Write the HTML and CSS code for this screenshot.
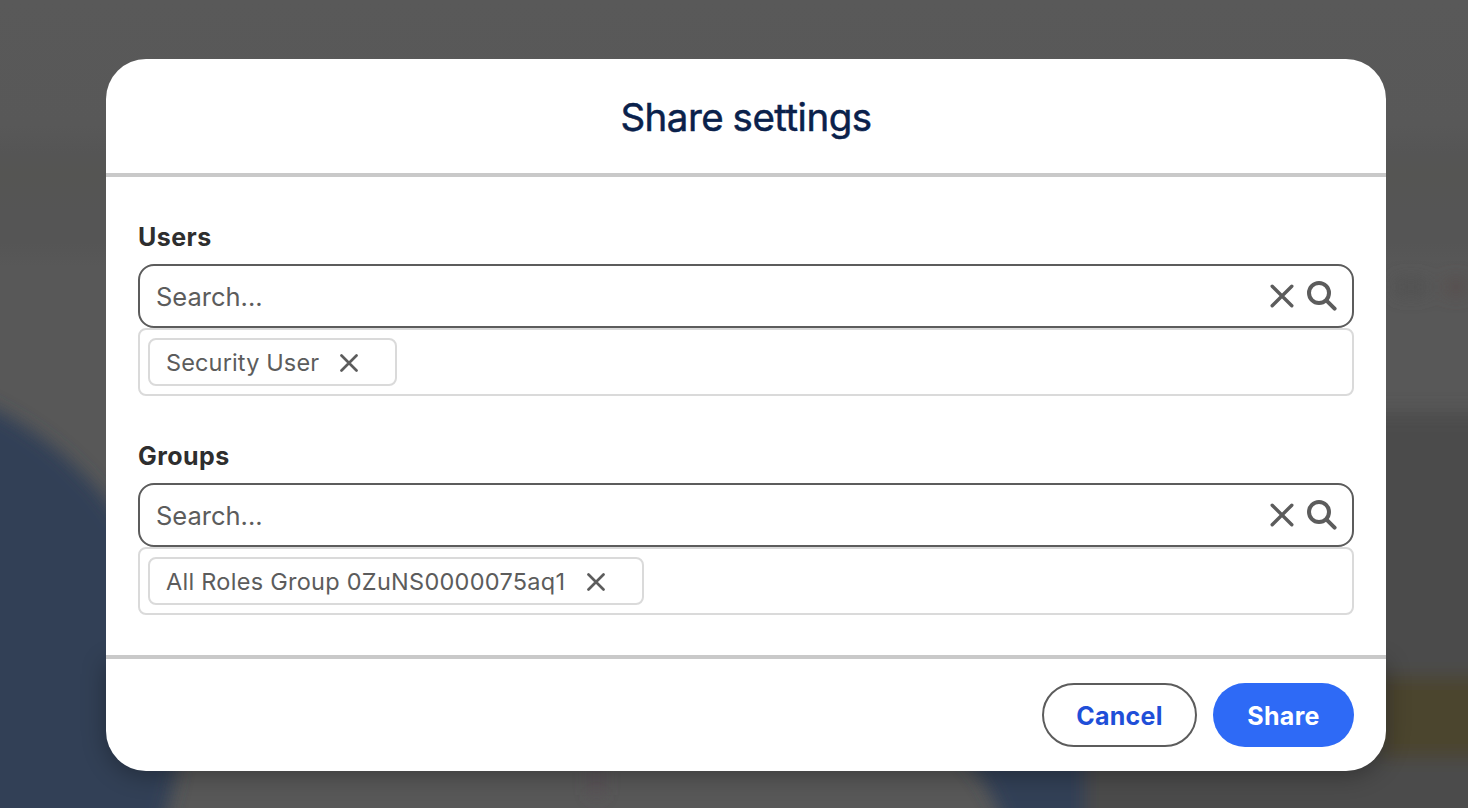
FILE: index.html
```html
<!DOCTYPE html>
<html lang="en">
<head>
<meta charset="utf-8">
<title>Share settings</title>
<link rel="stylesheet" href="styles.css">
</head>
<body>
<svg class="backdrop" viewBox="0 0 1468 808" aria-hidden="true">
  <defs>
    <filter id="soft" x="-20%" y="-20%" width="140%" height="140%"><feGaussianBlur stdDeviation="9"/></filter>
    <linearGradient id="page" x1="0" y1="0" x2="0" y2="1">
      <stop offset="0" stop-color="#595959"/><stop offset=".155" stop-color="#585858"/>
      <stop offset=".19" stop-color="#555555"/><stop offset=".215" stop-color="#555553"/>
      <stop offset=".26" stop-color="#555555"/><stop offset=".30" stop-color="#555555"/><stop offset=".33" stop-color="#585858"/>
      <stop offset="1" stop-color="#585858"/>
    </linearGradient>
  </defs>
  <rect width="1468" height="808" fill="url(#page)"/>
  <g filter="url(#soft)">
    <rect x="1085" y="412" width="450" height="450" fill="#4c4c4b"/>
    <rect x="1380" y="676" width="150" height="82" fill="#4b442d"/>
    <circle cx="-160" cy="713" r="341" fill="#324057"/>
    <path d="M930 730Q995 770 1010 850H1085V730Z" fill="#324057"/>
    <rect x="1395" y="280" width="32" height="14" fill="#505050"/>
    <rect x="1446" y="280" width="20" height="14" fill="#574b48"/>
    <rect x="592" y="760" width="9" height="35" fill="#5a4c54"/>
  </g>
</svg>
<main class="modal" role="dialog" aria-labelledby="title">
  <header class="modal-header"><h1 id="title" class="modal-title">Share settings</h1></header>
  <div class="modal-body">
    <section class="field">
      <h2 class="label">Users</h2>
      <div class="search">
        <span class="placeholder">Search...</span>
        <svg class="clear" viewBox="0 0 24 24"><path d="M2.2 2.2 21.8 21.8M21.8 2.2 2.2 21.8"/></svg>
        <svg class="find" viewBox="0 0 30 30"><circle cx="12" cy="12" r="10"/><path d="m19.3 19.3 8.3 8.3"/></svg>
      </div>
      <div class="selection">
        <div class="chip">
          <span class="chip-text">Security User</span>
          <svg class="remove" viewBox="0 0 18 18"><path d="M1.5 1.5 16.5 16.5M16.5 1.5 1.5 16.5"/></svg>
        </div>
      </div>
    </section>
    <section class="field">
      <h2 class="label">Groups</h2>
      <div class="search">
        <span class="placeholder">Search...</span>
        <svg class="clear" viewBox="0 0 24 24"><path d="M2.2 2.2 21.8 21.8M21.8 2.2 2.2 21.8"/></svg>
        <svg class="find" viewBox="0 0 30 30"><circle cx="12" cy="12" r="10"/><path d="m19.3 19.3 8.3 8.3"/></svg>
      </div>
      <div class="selection">
        <div class="chip chip-wide">
          <span class="chip-text">All Roles Group 0ZuNS0000075aq1</span>
          <svg class="remove" viewBox="0 0 18 18"><path d="M1.5 1.5 16.5 16.5M16.5 1.5 1.5 16.5"/></svg>
        </div>
      </div>
    </section>
  </div>
  <footer class="modal-footer">
    <button class="button cancel">Cancel</button>
    <button class="button share">Share</button>
  </footer>
</main>
</body>
</html>
```
FILE: styles.css
```css
* { box-sizing: border-box; }
body {
  margin: 0;
  height: 808px;
  overflow: hidden;
  padding: 59px 82px 37px 106px;
  background: #585858;
  font-family: Inter, "Liberation Sans", sans-serif;
  color: #5c5c5c;
}
.backdrop { position: absolute; z-index: -2; left: 0; top: 0; width: 1468px; height: 808px; }
.modal {
  position: relative;
  display: flex;
  flex-direction: column;
  width: 1280px;
  height: 712px;
  border-radius: 40px;
  background: #fff;
}
/* Shadow cast by the footer only */
.modal::before {
  content: "";
  position: absolute;
  z-index: -1;
  inset: 600px 0 0;
  border-radius: 0 0 40px 40px;
  box-shadow: 0 4px 24px rgba(0, 0, 0, .32);
}
.modal-header {
  display: flex;
  justify-content: center;
  align-items: center;
  height: 118px;
  padding-top: 2px;
  border-bottom: 4px solid #c9c9c9;
}
.modal-title {
  margin: 0;
  font-size: 38.5px;
  line-height: 48px;
  font-weight: 400;
  letter-spacing: -0.5px;
  word-spacing: -1px;
  font-variant-ligatures: none;
  font-feature-settings: "calt" 0;
  color: #0a214b;
  -webkit-text-stroke: 0.5px #0a214b;
}
.modal-body {
  display: flex;
  flex-direction: column;
  gap: 43px;
  height: 478px;
  padding: 43px 32px 0;
}
.field { height: 176px; }
.label {
  margin: 0 0 8px;
  height: 36px;
  line-height: 34px;
  font-size: 25px;
  font-weight: 700;
  letter-spacing: 0.45px;
  color: #2e2e2e;
}
.search {
  display: flex;
  align-items: center;
  height: 64px;
  padding: 0 16px;
  border: 2px solid #5c5c5c;
  border-radius: 16px;
}
.placeholder {
  flex: 1;
  padding-top: 2px;
  font-size: 25.5px;
  line-height: 32px;
}
.clear, .find, .remove { fill: none; stroke: #5c5c5c; stroke-linecap: round; }
.clear { width: 24px; height: 24px; stroke-width: 3.4; margin-right: 13px; }
.find { width: 30px; height: 30px; stroke-width: 4; margin-right: -1px; }
.selection {
  height: 68px;
  padding: 8px;
  border: 2px solid #dadada;
  border-radius: 8px;
}
.chip {
  display: flex;
  align-items: center;
  justify-content: space-between;
  width: 249px;
  height: 48px;
  padding: 2px 37px 0 16px;
  border: 2px solid #dadada;
  border-radius: 8px;
  white-space: nowrap;
}
.chip-wide { width: 496px; }
.chip-text { font-size: 23.5px; line-height: 30px; letter-spacing: 0.14px; }
.chip-wide .chip-text { letter-spacing: 0.27px; }
.remove { width: 18px; height: 18px; stroke-width: 2.7; }
.modal-footer {
  display: flex;
  justify-content: flex-end;
  gap: 16px;
  height: 116px;
  padding: 24px 32px;
  border-top: 4px solid #c9c9c9;
}
.button {
  height: 64px;
  padding: 2px 0 0;
  border: 0;
  border-radius: 32px;
  font: 700 25px/60px Inter, "Liberation Sans", sans-serif;
  letter-spacing: 0.3px;
}
.cancel { width: 155px; border: 2px solid #5c5c5c; background: #fff; color: #1f4fd8; line-height: 56px; }
.share { width: 141px; background: #2e6af6; color: #fff; }
```
